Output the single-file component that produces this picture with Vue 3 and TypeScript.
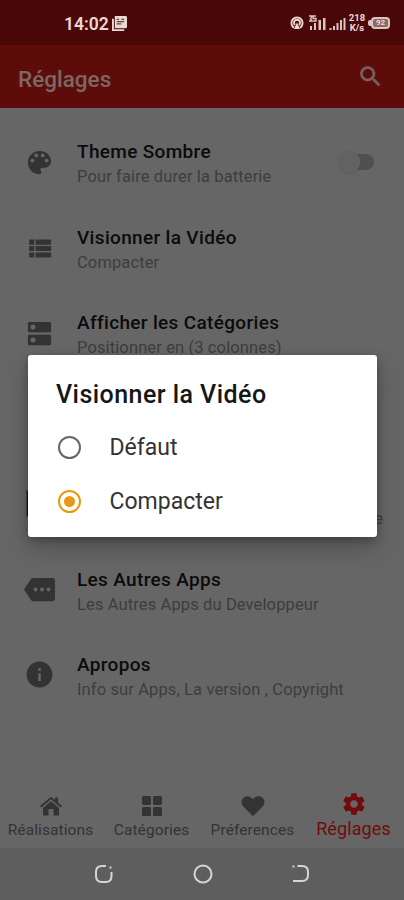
<script setup lang="ts">
import { ref } from 'vue'

interface Setting {
  id: string
  title: string
  subtitle: string
  icon: string
}

const settings: Setting[] = [
  { id: 'theme', title: 'Theme Sombre', subtitle: 'Pour faire durer la batterie', icon: 'M12 3c-4.97 0-9 4.03-9 9s4.03 9 9 9c.83 0 1.5-.67 1.5-1.5 0-.39-.15-.74-.39-1.01-.23-.26-.38-.61-.38-.99 0-.83.67-1.5 1.5-1.5H16c2.76 0 5-2.24 5-5 0-4.42-4.03-8-9-8zm-5.5 9c-.83 0-1.5-.67-1.5-1.5S5.67 9 6.5 9 8 9.67 8 10.500 7.330 12 6.500 12zm3-4C8.670 8 8 7.330 8 6.500S8.670 5 9.500 5s1.500.67 1.500 1.500S10.330 8 9.500 8zm5 0c-.83 0-1.500-.67-1.500-1.500S13.670 5 14.500 5s1.500.67 1.500 1.500S15.330 8 14.500 8zm3 4c-.83 0-1.500-.67-1.500-1.500S16.670 9 17.500 9s1.500.67 1.500 1.500-.67 1.500-1.500 1.500z' },
  { id: 'video', title: 'Visionner la Vidéo', subtitle: 'Compacter', icon: 'M4 14h4v-4H4v4zm0 5h4v-4H4v4zM4 9h4V5H4v4zm5 5h12v-4H9v4zm0 5h12v-4H9v4zM9 5v4h12V5H9z' },
  { id: 'categories', title: 'Afficher les Catégories', subtitle: 'Positionner en (3 colonnes)', icon: 'M20 13H4c-.55 0-1 .45-1 1v6c0 .55.45 1 1 1h16c.55 0 1-.45 1-1v-6c0-.55-.45-1-1-1zM7 19c-1.100 0-2-.9-2-2s.9-2 2-2 2 .9 2 2-.9 2-2 2zM20 3H4c-.55 0-1 .45-1 1v6c0 .55.45 1 1 1h16c.55 0 1-.45 1-1V4c0-.55-.45-1-1-1zM7 9c-1.100 0-2-.9-2-2s.9-2 2-2 2 .9 2 2-.9 2-2 2z' },
  { id: 'spacer', title: '', subtitle: '', icon: '' },
  { id: 'covered', title: '', subtitle: 'e', icon: 'M2 2H22V22H2z' },
  { id: 'apps', title: 'Les Autres Apps', subtitle: 'Les Autres Apps du Developpeur', icon: 'M22 3H7c-.69 0-1.230.35-1.590.88L0 12l5.410 8.110c.36.53.97.89 1.660.89H22c1.100 0 2-.9 2-2V5c0-1.100-.9-2-2-2zM9 13.500c-.83 0-1.500-.67-1.500-1.500s.67-1.500 1.500-1.500 1.500.67 1.500 1.500-.67 1.500-1.500 1.500zm5 0c-.83 0-1.500-.67-1.500-1.500s.67-1.500 1.500-1.500 1.500.67 1.500 1.500-.67 1.500-1.500 1.500zm5 0c-.83 0-1.500-.67-1.500-1.500s.67-1.500 1.500-1.500 1.500.67 1.500 1.500-.67 1.500-1.500 1.500z' },
  { id: 'about', title: 'Apropos', subtitle: 'Info sur Apps, La version , Copyright', icon: 'M12 2C6.480 2 2 6.480 2 12s4.480 10 10 10 10-4.480 10-10S17.520 2 12 2zm1 15h-2v-6h2v6zm0-8h-2V7h2v2z' },
]

const tabs = [
  { id: 'home', label: 'Réalisations', icon: 'M11.400 3.200a1 1 0 0 1 1.200 0L16 6V3.500h3v5l4 3.400-1.300 1.500L12 5.200l-9.700 8.200L1 11.900zM4 14l8-6.800 8 6.800v7.500h-5.500V15h-5v6.500H4z' },
  { id: 'grid', label: 'Catégories', icon: 'M3.500 2h6Q11 2 11 3.500v6Q11 11 9.500 11h-6Q2 11 2 9.500v-6Q2 2 3.500 2zM14.500 2h6Q22 2 22 3.500v6q0 1.500-1.500 1.500h-6Q13 11 13 9.500v-6Q13 2 14.500 2zM3.500 13h6q1.500 0 1.500 1.500v6Q11 22 9.500 22h-6Q2 22 2 20.500v-6Q2 13 3.500 13zM14.500 13h6q1.500 0 1.500 1.500v6q0 1.500-1.500 1.500h-6Q13 22 13 20.500v-6q0-1.500 1.500-1.500z' },
  { id: 'heart', label: 'Préferences', icon: 'M11 21.300 2.400 12.600C-.2 9.800.1 5.500 2.700 3.500 5.500 1.300 9 2 12 5.100 15 2 18.500 1.300 21.300 3.500c2.600 2 2.900 6.300.3 9.100L13 21.300q-1 1-2 0z' },
  { id: 'gear', label: 'Réglages', icon: 'M19.430 12.980c.04-.32.07-.64.07-.98s-.03-.66-.07-.98l2.110-1.650c.19-.15.24-.42.12-.64l-2-3.460c-.12-.22-.39-.3-.61-.22l-2.490 1c-.52-.4-1.080-.73-1.690-.98l-.38-2.650C14.460 2.180 14.250 2 14 2h-4c-.25 0-.46.18-.49.42l-.38 2.650c-.61.25-1.170.59-1.690.98l-2.490-1c-.23-.09-.49 0-.61.22l-2 3.460c-.13.22-.07.49.12.64l2.110 1.650c-.04.32-.07.65-.07.98s.03.66.07.98l-2.110 1.650c-.19.15-.24.42-.12.64l2 3.460c.12.22.39.3.61.22l2.490-1c.52.4 1.080.73 1.690.98l.38 2.650c.03.24.24.42.49.42h4c.25 0 .46-.18.49-.42l.38-2.650c.61-.25 1.170-.59 1.690-.98l2.490 1c.23.09.49 0 .61-.22l2-3.460c.12-.22.07-.49-.12-.64l-2.110-1.650zM12 15.500c-1.930 0-3.500-1.570-3.500-3.500s1.570-3.500 3.500-3.500 3.500 1.570 3.500 3.500-1.570 3.500-3.500 3.500z' },
]

const choices = ['Défaut', 'Compacter']
const selected = ref('Compacter')
</script>

<template>
  <div class="screen">
    <header class="status">
      <span class="clock">14:02</span>
      <svg class="news" viewBox="0 0 16 16"><path d="M3 0h12l1 1v11l-1 1H3z" fill="#ead8d5" /><path d="M1 3v12h12" fill="none" stroke="#ead8d5" stroke-width="2" /><path d="M5 3.500h2.500M5 6h8M5 8.500h5M10 3.500h3" stroke="#65413f" stroke-width="1.300" /></svg>
      <svg class="hotspot" viewBox="0 0 14 14"><path d="M4 11.700A5.600 5.600 0 1 1 10 11.700M5 9A3 3 0 1 1 9 9" fill="none" stroke="#ead8d5" stroke-width="1.900" /><path d="M7 6.500 10 13H4z" fill="#ead8d5" /></svg>
      <svg class="signals" viewBox="0 0 38 16"><g fill="#dac5c2"><path d="M2 11h2v4H2zM6 8h2v7H6zM10.500 5H13v10h-2.500zM15 3h2.500v12H15zM21.500 13h2v2h-2zM25 11h2v4h-2zM28.500 8h2v7h-2zM32 5h2v10h-2zM35.500 3h2v12h-2z" /></g><path d="M1 1h3L2.500 4 4 6H1M8 1H5v2.500h3V6H5" fill="none" stroke="#dac5c2" stroke-width="1.400" /></svg>
      <span class="speed"><b>218</b><b>K/s</b></span>
      <span class="battery">92</span>
    </header>
    <div class="toolbar">
      <h1>Réglages</h1>
      <svg class="search" viewBox="0 0 24 24"><path d="M15.500 14h-.79l-.28-.27C15.410 12.590 16 11.110 16 9.500 16 5.910 13.090 3 9.500 3S3 5.910 3 9.500 5.910 16 9.500 16c1.610 0 3.090-.59 4.230-1.570l.27.28v.79l5 4.990L20.490 19l-4.990-5zm-6 0C7.010 14 5 11.990 5 9.500S7.010 5 9.500 5 14 7.010 14 9.500 11.990 14 9.500 14z" /></svg>
    </div>
    <main class="list">
      <section v-for="item in settings" :key="item.id" class="row" :class="item.id">
        <span class="lead"><svg viewBox="0 0 24 24"><path :d="item.icon" /></svg></span>
        <div class="copy">
          <h2>{{ item.title }}</h2>
          <p>{{ item.subtitle }}</p>
        </div>
        <span v-if="item.id === 'theme'" class="switch"><i></i></span>
      </section>
    </main>
    <nav class="tabs">
      <div v-for="tab in tabs" :key="tab.id" class="tab" :class="tab.id">
        <svg viewBox="0 0 24 24"><path :d="tab.icon" /></svg>
        <span>{{ tab.label }}</span>
      </div>
    </nav>
    <footer class="system">
      <svg viewBox="0 0 20 20"><path d="M12 2H8Q2 2 2 8v4q0 6 6 6h4q5.500 0 5.500-6V8M16.500 2.500v2" /></svg>
      <svg viewBox="0 0 20 20"><circle cx="10" cy="10" r="8.500" /></svg>
      <svg viewBox="0 0 20 20"><path d="M6.500 2H11q6 0 6 6v3q0 6-6 6H2M1.500 2.500h2" /></svg>
    </footer>
    <div class="dialog" role="dialog">
      <h3>Visionner la Vidéo</h3>
      <div v-for="choice in choices" :key="choice" class="choice" @click="selected = choice">
        <span class="radio" :class="{ on: selected === choice }"></span>
        <span class="choice-label">{{ choice }}</span>
      </div>
    </div>
  </div>
</template>

<style>
body { margin: 0; }
</style>
<style scoped>
.screen { position: relative; display: flex; flex-direction: column; width: 404px; height: 900px; overflow: hidden; background: #666; font-family: Roboto, sans-serif; }
h1, h2, h3, p { margin: 0; }
svg { display: block; flex: none; }
.status { display: flex; align-items: center; box-sizing: border-box; height: 45px; padding: 1px 13px 0 64px; background: #4a0908; color: #ead8d5; }
.clock { width: 48px; padding-top: 1px; font-size: 17.500px; font-weight: 600; line-height: 20px; white-space: nowrap; }
.news { width: 15px; height: 15px; }
.hotspot { width: 14px; height: 14px; margin-left: 163px; }
.signals { width: 38px; height: 16px; margin-left: 4px; }
.speed { display: flex; flex-direction: column; align-items: center; width: 18px; margin-left: 2px; font-size: 9.500px; line-height: 10px; }
.battery { position: relative; box-sizing: border-box; width: 19px; height: 12px; margin-left: 5px; border: 2px solid #dac5c2; border-radius: 4px; background: #8b6865; font-size: 8px; font-weight: 700; line-height: 8px; text-align: center; }
.battery::before { content: ''; position: absolute; left: -5px; top: 1px; width: 3px; height: 6px; border-radius: 2px 0 0 2px; background: #dac5c2; }
.toolbar { display: flex; align-items: center; justify-content: space-between; box-sizing: border-box; height: 63px; padding: 0 20px 0 18px; background: #5e0c0a; }
h1 { margin-top: 4px; color: #7b6865; font-size: 22.500px; font-weight: 500; line-height: 28px; }
.search { width: 27px; height: 27px; fill: #766461; stroke: #766461; stroke-width: .4; }
.list { flex: 1; min-height: 0; padding-top: 11px; overflow: hidden; }
.row { display: flex; align-items: center; height: 85.500px; padding-left: 24px; }
.lead { width: 53px; }
.lead svg { width: 31px; height: 31px; margin-left: -.5px; fill: #333; }
.theme .lead svg { margin-top: 1px; }
.video .lead svg { margin-top: 2px; }
.categories .lead svg { margin-top: 1px; }
.apps .lead svg { margin-left: 0; }
.covered .lead svg { fill: #161616; }
.copy { display: flex; flex: 1; flex-direction: column; gap: 1px; padding-top: 4px; }
h2 { height: 25px; color: #0b0b0b; font-size: 19px; font-weight: 500; line-height: 25px; letter-spacing: .33px; white-space: nowrap; }
p { height: 23px; color: #3d3d3d; font-size: 16.500px; line-height: 23px; letter-spacing: .12px; white-space: nowrap; }
.covered p { padding-right: 21px; text-align: right; }
.switch { display: flex; align-items: center; width: 34px; height: 16px; margin-right: 30px; border-radius: 8px; background: #505050; }
.switch i { width: 22px; height: 22px; margin-left: -2px; border-radius: 50%; background: #626262; box-shadow: 0 1px 2px #5558; }
.tabs { display: flex; height: 65px; }
.tab { display: flex; flex: 1; flex-direction: column; align-items: center; color: #333; font-size: 15.500px; line-height: 20px; letter-spacing: .1px; }
.tab svg { width: 24px; height: 24px; margin: 10.500px 0 2.500px; fill: currentColor; }
.tab.gear { color: #720b0b; font-size: 18px; }
.tab.gear svg { width: 26px; height: 26px; margin: 8px 0 2px; }
.system { display: flex; align-items: center; justify-content: center; gap: 78.500px; box-sizing: border-box; height: 52px; padding-left: 1px; background: #5e5e5e; }
.system svg { width: 20px; height: 20px; fill: none; stroke: #d5d5d5; stroke-width: 2; }
.dialog { position: absolute; left: 28px; top: 355px; box-sizing: border-box; width: 349px; height: 182px; padding: 23px 28px 0; border-radius: 3px; background: #fff; box-shadow: 0 12px 24px #0003, 0 3px 8px #0004; }
h3 { height: 42px; color: #161616; font-size: 25px; font-weight: 500; line-height: 34px; letter-spacing: .45px; white-space: nowrap; }
.choice { display: flex; align-items: center; height: 54px; }
.radio { display: flex; align-items: center; justify-content: center; box-sizing: border-box; width: 23px; height: 23px; margin: 0 29px 0 1.500px; border: 2px solid #666; border-radius: 50%; }
.radio.on { border-color: #eb980e; }
.radio.on::after { content: ''; width: 11px; height: 11px; border-radius: 50%; background: #eb980e; }
.choice-label { padding-top: 2px; color: #333; font-size: 23px; line-height: 30px; }
</style>
